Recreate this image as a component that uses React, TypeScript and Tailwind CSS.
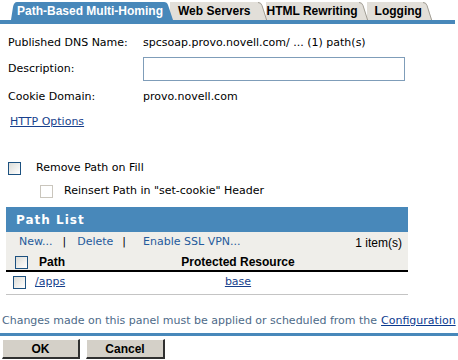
import React from 'react'

const BLUE = 'bg-[#4888ba]'

function TabEdge({ fill, stroke }: { fill: string; stroke?: string }) {
  return (
    <svg width="9" height="18" viewBox="0 0 9 18" className="block shrink-0">
      <path d="M0 0 Q3 0 4 3 L9 18 L0 18 Z" fill={fill} />
      {stroke && <path d="M0 0.5 Q3 0.5 4 3.5 L8.6 18" fill="none" stroke={stroke} strokeWidth="1" />}
    </svg>
  )
}

function Tabs() {
  return (
    <div className="h-[24px] flex flex-col">
      <div className="h-[20px] flex items-end pl-[11px] pt-[2px]">
        <div className="relative z-40 flex items-end -mr-[1px]">
          <svg width="6" height="18" viewBox="0 0 6 18" className="block shrink-0">
            <path d="M0 18 L2 5 Q3 0 6 0 L6 18 Z" fill="#4888ba" />
          </svg>
          <div className={`h-[18px] ${BLUE} flex items-center pr-[1px] text-white font-bold text-[12px] font-['Liberation_Sans',sans-serif]`}>
            Path-Based Multi-Homing
          </div>
          <TabEdge fill="#4888ba" />
        </div>
        <div className="relative z-30 flex items-end -ml-[2px]">
          <div className="h-[18px] bg-[#e2dfd9] flex items-center pl-[8px] pr-[7px] text-black font-bold text-[12px] font-['Liberation_Sans',sans-serif]">
            Web Servers
          </div>
          <TabEdge fill="#e2dfd9" stroke="#a29e95" />
        </div>
        <div className="relative z-20 flex items-end -ml-[1px]">
          <div className="h-[18px] bg-[#e2dfd9] flex items-center pl-[1px] pr-[1px] text-black font-bold text-[12px] font-['Liberation_Sans',sans-serif]">
            HTML Rewriting
          </div>
          <TabEdge fill="#e2dfd9" stroke="#a29e95" />
        </div>
        <div className="relative z-10 flex items-end -ml-[1px]">
          <div className="h-[18px] bg-[#e2dfd9] flex items-center pl-[8px] pr-[1px] text-black font-bold text-[12px] font-['Liberation_Sans',sans-serif]">
            Logging
          </div>
          <TabEdge fill="#e2dfd9" stroke="#a29e95" />
        </div>
      </div>
      <div className={`h-[4px] ${BLUE} mr-[3px]`} />
    </div>
  )
}

function Checkbox({ muted }: { muted?: boolean }) {
  return (
    <span
      className={
        muted
          ? 'block w-[13px] h-[13px] border border-[#cac6bd] bg-white shrink-0'
          : 'block w-[13px] h-[13px] border border-[#1c5180] bg-gradient-to-br from-[#dcdcd7] to-white shrink-0'
      }
    />
  )
}

export default function App() {
  return (
    <div className="w-[458px] h-[360px] overflow-hidden bg-white text-black text-[11px] font-['DejaVu_Sans',sans-serif]">
      <Tabs />

      <div className="mt-[9px] h-[20px] flex items-center pl-[8px]">
        <span className="w-[135px]">Published DNS Name:</span>
        <span>spcsoap.provo.novell.com/ ... (1) path(s)</span>
      </div>
      <div className="mt-[4px] h-[24px] flex items-center pl-[8px]">
        <span className="w-[135px]">Description:</span>
        <input className="w-[262px] h-[24px] border border-[#7f9db9] bg-white outline-none px-1" />
      </div>
      <div className="mt-[6px] h-[20px] flex items-center pl-[8px]">
        <span className="w-[135px]">Cookie Domain:</span>
        <span>provo.novell.com</span>
      </div>
      <div className="mt-[5px] h-[20px] flex items-center pl-[10px]">
        <a className="text-[#173f8c] underline">HTTP Options</a>
      </div>

      <div className="mt-[29px] h-[15px] flex items-center pl-[8px]">
        <Checkbox />
        <span className="ml-[15px]">Remove Path on Fill</span>
      </div>
      <div className="mt-[8px] h-[15px] flex items-center pl-[40px]">
        <Checkbox muted />
        <span className="ml-[11px]">Reinsert Path in "set-cookie" Header</span>
      </div>

      <div className="mt-[8px] ml-[6px] w-[402px]">
        <div className={`h-[25px] ${BLUE} flex items-center pl-[10px] text-white font-bold text-[12px] tracking-[1px]`}>
          Path List
        </div>
        <div className="bg-[#efeeea]">
          <div className="h-[21px] flex items-center pl-[13px] pr-[6px] text-[#255a9c]">
            <span>New...</span>
            <span className="ml-[10px] text-black">|</span>
            <span className="ml-[11px]">Delete</span>
            <span className="ml-[9px] text-black">|</span>
            <span className="ml-[17px]">Enable SSL VPN...</span>
            <span className="ml-auto text-black text-[12px] font-['Liberation_Sans',sans-serif]">1 item(s)</span>
          </div>
          <div className="h-[19px] grid grid-cols-[100px_264px_1fr] items-center border-b-2 border-black font-bold text-[12px] font-['Liberation_Sans',sans-serif]">
            <div className="flex items-center pl-[9px]">
              <Checkbox />
              <span className="ml-[11px]">Path</span>
            </div>
            <div className="text-center">Protected Resource</div>
            <div />
          </div>
        </div>
        <div className="h-[20px] grid grid-cols-[100px_264px_1fr] items-center">
          <div className="flex items-center pl-[7px]">
            <Checkbox />
            <a className="ml-[9px] text-[#173f8c] underline">/apps</a>
          </div>
          <div className="text-center">
            <a className="text-[#173f8c] underline">base</a>
          </div>
          <div />
        </div>
        <div className="mt-[2px] h-px bg-[#c4c4c4]" />
      </div>

      <div className="mt-[16px] h-[20px] flex items-center pl-[2px] whitespace-nowrap text-[#4d6a88]">
        <span>Changes made on this panel must be applied or scheduled from the </span>
        <a className="ml-[4px] text-[#0b3a8f] underline">Configuration</a>
      </div>
      <div className={`mt-[2px] h-[3px] ${BLUE}`} />
      <div className="mt-[3px] flex gap-[6px] pl-[2px]">
        <button className="w-[78px] h-[20px] bg-[#d4d0c8] border-t border-l border-white border-r-2 border-b-2 border-r-[#303030] border-b-[#303030] font-bold text-[12px] font-['Liberation_Sans',sans-serif] flex items-center justify-center">
          OK
        </button>
        <button className="w-[79px] h-[20px] bg-[#d4d0c8] border-t border-l border-white border-r-2 border-b-2 border-r-[#303030] border-b-[#303030] font-bold text-[12px] font-['Liberation_Sans',sans-serif] flex items-center justify-center">
          Cancel
        </button>
      </div>
    </div>
  )
}
